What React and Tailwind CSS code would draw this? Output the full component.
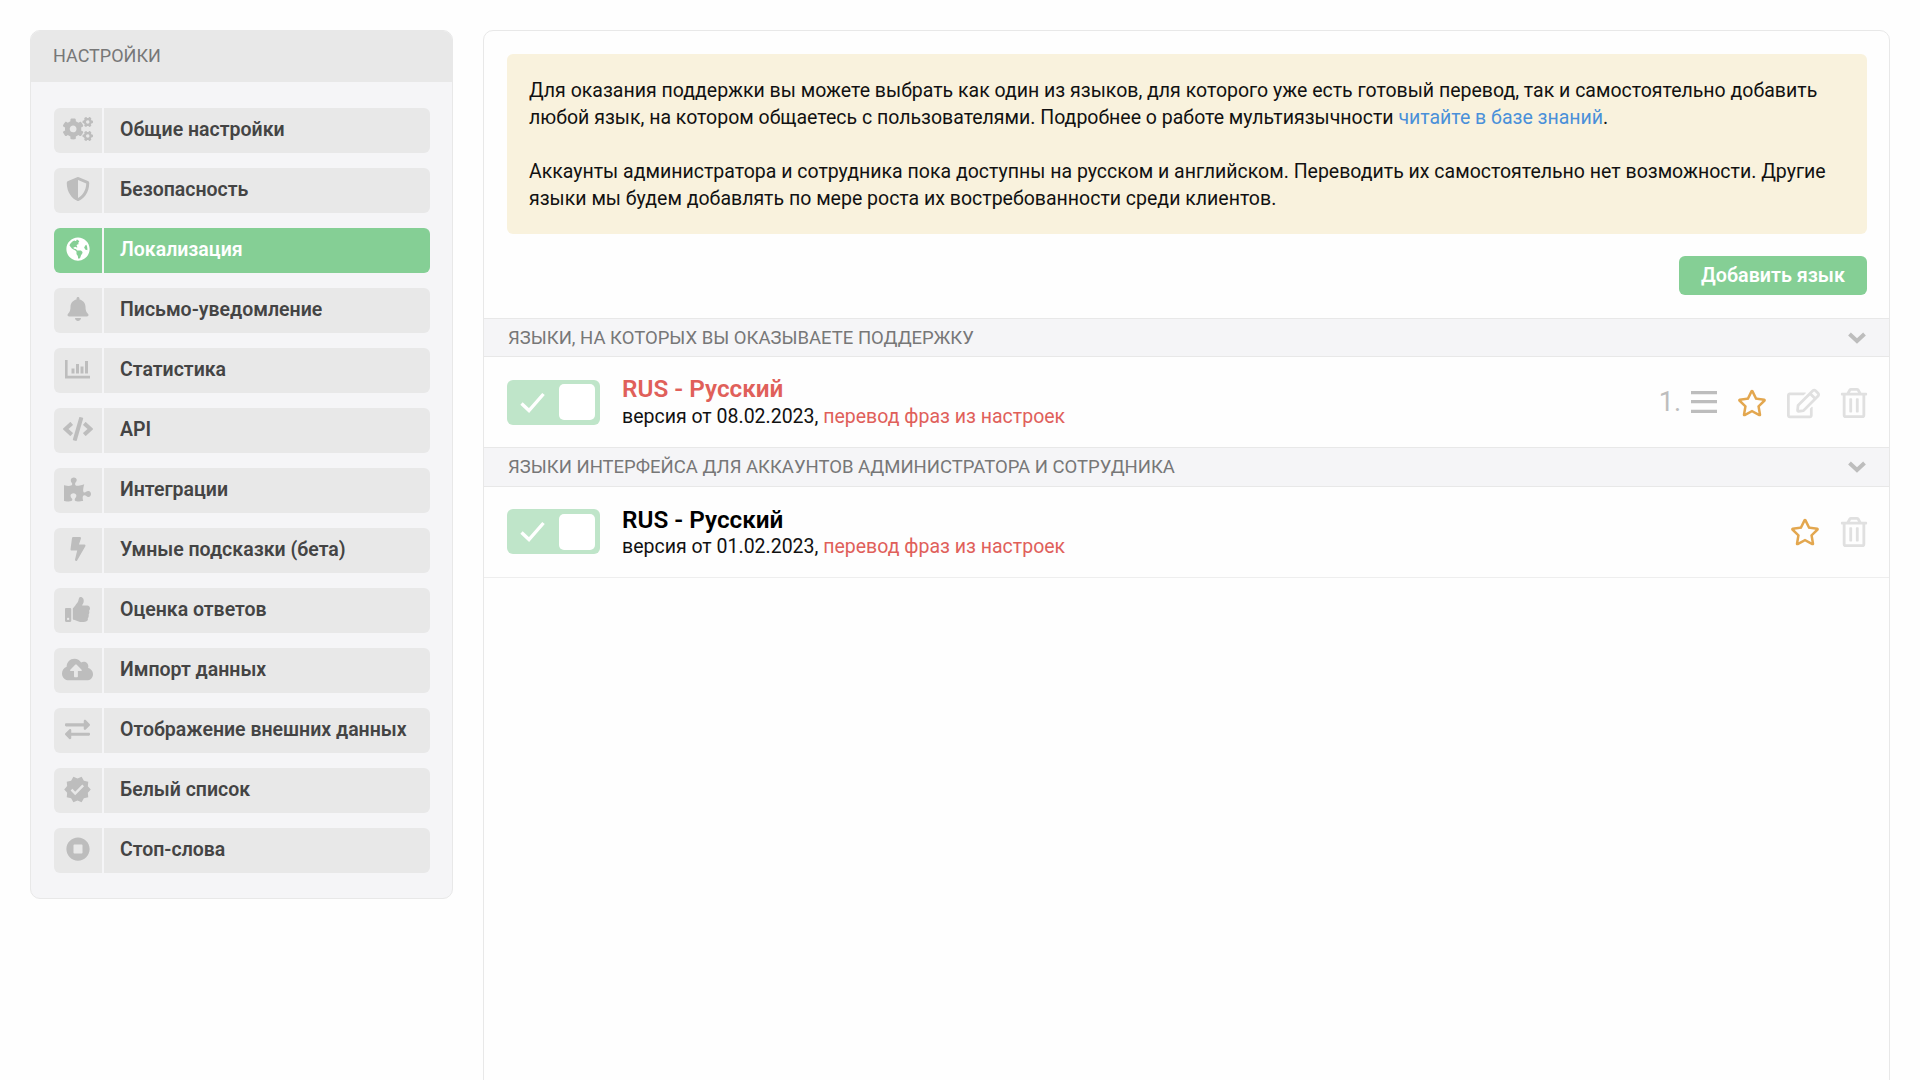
import React from 'react';
import {
  FaCogs, FaShieldAlt, FaGlobeAmericas, FaBell, FaCode, FaPuzzlePiece, FaBolt, FaThumbsUp,
  FaCloudUploadAlt, FaExchangeAlt, FaStopCircle, FaRegStar, FaRegEdit, FaRegTrashAlt,
} from 'react-icons/fa';
import { MdVerified } from 'react-icons/md';

function BarChartIcon() {
  return (
    <svg width="25" height="19" viewBox="0 0 25 19" fill="currentColor" className="mt-[1px]">
      <path d="M0 0h2.600v15.800H25V18.500H0z" />
      <path d="M6.500 8.500h3v5h-3zM11 4h3v9.500h-3zM15.500 6.500h3v7h-3zM20 1h3v12.500h-3z" />
    </svg>
  );
}

function BarsIcon() {
  return (
    <svg width="26" height="22" viewBox="0 0 26 22" fill="currentColor" className="mr-[20px]">
      <path d="M0 0h26v3.300H0zM0 9h26v3.300H0zM0 18.700h26V22H0z" />
    </svg>
  );
}

function Chevron() {
  return (
    <svg width="18" height="12" viewBox="0 0 18 12" fill="none" stroke="#bdbdbd" strokeWidth="4">
      <path d="M1.500 2 L9 9 L16.500 2" />
    </svg>
  );
}

const menu = [
  { label: 'Общие настройки', icon: <FaCogs size={30} /> },
  { label: 'Безопасность', icon: <FaShieldAlt size={24} /> },
  { label: 'Локализация', icon: <FaGlobeAmericas size={24} />, active: true },
  { label: 'Письмо-уведомление', icon: <FaBell size={24} /> },
  { label: 'Статистика', icon: <BarChartIcon /> },
  { label: 'API', icon: <FaCode size={30} /> },
  { label: 'Интеграции', icon: <FaPuzzlePiece size={27} /> },
  { label: 'Умные подсказки (бета)', icon: <FaBolt size={24} /> },
  { label: 'Оценка ответов', icon: <FaThumbsUp size={25} /> },
  { label: 'Импорт данных', icon: <FaCloudUploadAlt size={31} /> },
  { label: 'Отображение внешних данных', icon: <FaExchangeAlt size={25} /> },
  { label: 'Белый список', icon: <MdVerified size={29} /> },
  { label: 'Стоп-слова', icon: <FaStopCircle size={24} /> },
];

function MenuItem({ item }) {
  return (
    <div className="flex h-[45px]">
      <div className={`w-[48px] rounded-l-[6px] flex items-center justify-center pb-[3px] pr-[1px] ${item.active ? 'bg-[#85cf95] text-white' : 'bg-[#e8e8e8] text-[#bdbdbd]'}`}>
        {item.icon}
      </div>
      <div className={`flex-1 ml-[2px] rounded-r-[6px] pl-[16px] flex items-center pb-[2px] text-[19.5px] font-semibold ${item.active ? 'bg-[#85cf95] text-white' : 'bg-[#e8e8e8] text-[#444444]'}`}>
        {item.label}
      </div>
    </div>
  );
}

function SectionHeader({ title, first }) {
  return (
    <div className={`flex items-center justify-between bg-[#f5f5f7] border-y border-[#e8e8e8] pl-[24px] pr-[23px] text-[18.5px] text-[#777777] uppercase ${first ? 'h-[39px]' : 'h-[40px]'}`}>
      <span className="pt-[2px]">{title}</span>
      <Chevron />
    </div>
  );
}

function Toggle({ up }) {
  return (
    <div className={`w-[93px] h-[45px] rounded-[6px] bg-[#bfe5c9] flex items-center justify-between pl-[13px] pr-[5px] ${up ? 'mb-[1px]' : ''}`}>
      <svg width="25" height="21" viewBox="0 0 25 21" fill="none" stroke="#ffffff" strokeWidth="3.400">
        <path d="M1.500 11.500 L9 18.500 L23.500 2" />
      </svg>
      <div className="w-[36px] h-[36px] rounded-[5px] bg-white" />
    </div>
  );
}

function LangRow({ date, active, order }) {
  const shift = order ? 'mt-[2px]' : '';
  return (
    <div className="flex items-center h-[90px] pl-[23px] pr-[20px]">
      <Toggle up={!order} />
      <div className="flex-1 ml-[22px] pt-[1px]">
        <div className={`text-[24.3px] leading-[27px] font-semibold ${active ? 'text-[#e0605a]' : 'text-black'}`}>RUS - Русский</div>
        <div className={`text-[19.5px] leading-[27px] text-[#111111] ${order ? 'pt-[1px]' : ''}`}>
          версия от {date}, <span className="text-[#e0605a]">перевод фраз из настроек</span>
        </div>
      </div>
      {order && (
        <div className="flex items-center text-[#bdbdbd]">
          <span className="text-[27px] mr-[10px]">1.</span>
          <BarsIcon />
        </div>
      )}
      <FaRegStar size={30} className={`text-[#e3a74f] ${shift}`} />
      {order && <FaRegEdit size={33} className={`text-[#e0e0e0] ml-[20px] ${shift}`} />}
      <FaRegTrashAlt size={30} className={`text-[#e0e0e0] ml-[19px] ${shift}`} />
    </div>
  );
}

export default function App() {
  return (
    <div className="h-[1080px] overflow-hidden bg-[#fefefe] flex gap-[30px] pt-[30px] pl-[30px] pr-[30px] font-['Roboto',sans-serif]">
      <aside className="w-[423px] h-[869px] shrink-0 rounded-[10px] border border-[#e8e8e8] bg-[#f5f5f7] overflow-hidden">
        <div className="h-[51px] bg-[#e8e8e8] pl-[22px] pb-[2px] flex items-center text-[18px] text-[#777777] uppercase">Настройки</div>
        <div className="flex flex-col gap-[15px] pt-[26px] pl-[23px] pr-[22px]">
          {menu.map((item) => <MenuItem key={item.label} item={item} />)}
        </div>
      </aside>

      <main className="flex-1 h-[1080px] rounded-t-[10px] border border-[#e8e8e8] bg-[#fefefe]">
        <div className="pt-[23px] pl-[23px] pr-[22px]">
          <div className="h-[180px] rounded-[6px] bg-[#f9f2dd] pl-[22px] pr-[22px] pt-[23px] text-[19.5px] leading-[27px] text-[#111111]">
            <p>Для оказания поддержки вы можете выбрать как один из языков, для которого уже есть готовый перевод, так и самостоятельно добавить любой язык, на котором общаетесь с пользователями. Подробнее о работе мультиязычности <span className="text-[#4a90d9]">читайте в базе знаний</span>.</p>
            <p className="mt-[27px]">Аккаунты администратора и сотрудника пока доступны на русском и английском. Переводить их самостоятельно нет возможности. Другие языки мы будем добавлять по мере роста их востребованности среди клиентов.</p>
          </div>
          <div className="flex justify-end mt-[22px] mb-[23px]">
            <button className="w-[188px] h-[39px] rounded-[6px] bg-[#85cf95] text-white text-[19.7px] font-semibold">Добавить язык</button>
          </div>
        </div>
        <SectionHeader title="Языки, на которых вы оказываете поддержку" first />
        <LangRow date="08.02.2023" active order />
        <SectionHeader title="Языки интерфейса для аккаунтов администратора и сотрудника" />
        <LangRow date="01.02.2023" />
        <div className="border-t border-[#eeeeee]" />
      </main>
    </div>
  );
}
